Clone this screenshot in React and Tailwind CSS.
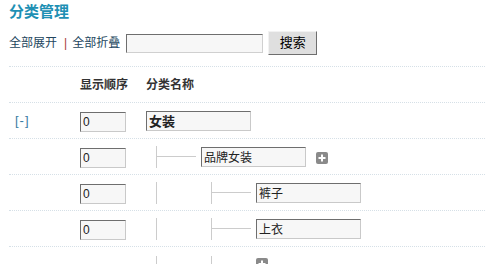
import React from "react";

const font = { fontFamily: '"Liberation Sans", "Noto Sans CJK SC", sans-serif' };

// one indent step of the tree: either a plain pipe or a branch into the node
function Seg({ kind }) {
  if (kind === "pipe") {
    return (
      <div className="flex h-[22px] w-[55px] shrink-0 items-center">
        <div className="ml-[10px] h-[22px] w-px bg-[#cccccc]" />
      </div>
    );
  }
  return (
    <div className="flex w-[55px] shrink-0 items-center">
      <div className="ml-[10px] flex h-[22px] w-[40px] items-center border-l border-[#cccccc]">
        <div className="h-px w-full bg-[#cccccc]" />
      </div>
    </div>
  );
}

function PlusIcon() {
  return (
    <svg width="12" height="12" viewBox="0 0 12 12" className="shrink-0">
      <rect x="0" y="0" width="12" height="12" rx="2" fill="#8a8a8a" />
      <rect x="5" y="2.5" width="2" height="7" fill="#fff" />
      <rect x="2.5" y="5" width="7" height="2" fill="#fff" />
    </svg>
  );
}

const inputCls =
  "h-[20px] border border-t-[#6e6e6e] border-l-[#6e6e6e] border-b-[#c9c9c9] border-r-[#c9c9c9] bg-[#f7f7f7] text-[#222] outline-none";

const rows = [
  { toggle: "[-]", segs: [], name: "女装", bold: true },
  { segs: ["branch"], name: "品牌女装", plus: true },
  { segs: ["pipe", "branch"], name: "裤子" },
  { segs: ["pipe", "branch"], name: "上衣" },
];

export default function App() {
  return (
    <div className="min-h-screen bg-white pl-[9px]" style={font}>
      <div className="h-[31px] pt-[3px]">
        <h1 className="text-[15px] font-bold leading-[18px] text-[#1e90b4]">分类管理</h1>
      </div>

      <div className="flex h-[24px] items-center text-[12px] text-[#23465e]">
        <span>全部展开</span>
        <span className="ml-[7px] text-[#a83a3a]">|</span>
        <span className="ml-[5px]">全部折叠</span>
        <input
          readOnly
          className="ml-[6px] h-[19px] w-[137px] border border-t-[#6e6e6e] border-l-[#6e6e6e] border-b-[#d0d0d0] border-r-[#d0d0d0] bg-[#f7f7f7] outline-none"
        />
        <button className="ml-[5px] h-[24px] w-[49px] border border-t-[#f2f2f2] border-l-[#f2f2f2] border-b-[#6e6e6e] border-r-[#6e6e6e] bg-[#dfdfdf] text-[13px] text-black">
          搜索
        </button>
      </div>

      <div className="mt-[11px]">
        <div className="flex h-[36px] items-center border-t border-dotted border-[#d6e0e7] text-[12px] font-bold text-[#333]">
          <div className="w-[71px]" />
          <div className="w-[66px]">显示顺序</div>
          <div>分类名称</div>
        </div>

        {rows.map((r, i) => (
          <div
            key={i}
            className="flex h-[36px] items-center border-t border-dotted border-[#d6e0e7]"
          >
            <div className="w-[71px] pl-[6px] text-[13px] tracking-[1px] text-[#3a7ca3]">{r.toggle}</div>
            <div className="w-[66px]">
              <input readOnly value="0" className={`${inputCls} w-[46px] pl-[2px] text-[12px]`} />
            </div>
            <div className="flex items-center">
              {r.segs.map((s, j) => (
                <Seg key={j} kind={s} />
              ))}
              <input
                readOnly
                value={r.name}
                className={`${inputCls} w-[105px] pl-[2px] ${r.bold ? "text-[13px] font-bold" : "text-[12px]"}`}
              />
              {r.plus && (
                <div className="ml-[10px] mt-[2px] flex">
                  <PlusIcon />
                </div>
              )}
            </div>
          </div>
        ))}

        <div className="flex h-[36px] items-start border-t border-dotted border-[#d6e0e7] pt-[9px]">
          <div className="w-[137px]" />
          <Seg kind="pipe" />
          <Seg kind="pipe" />
          <div className="mt-[2px] flex">
            <PlusIcon />
          </div>
        </div>
      </div>
    </div>
  );
}
